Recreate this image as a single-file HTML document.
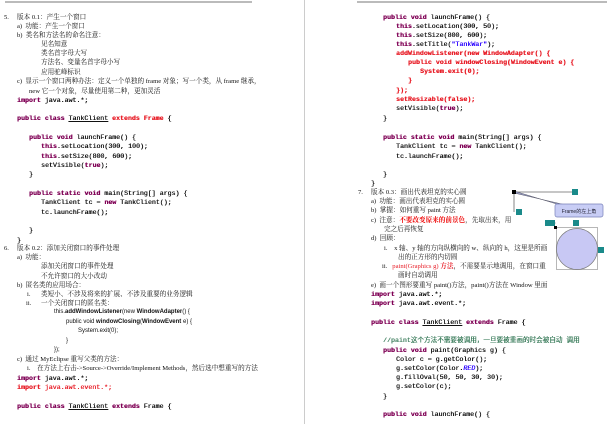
<!DOCTYPE html>
<html><head><meta charset="utf-8"><style>
html,body{margin:0;padding:0;background:#fff;width:607px;height:424px;overflow:hidden;position:relative}
.l{position:absolute;white-space:nowrap;line-height:9px;font-size:6.6px;color:#111}
.t{font-family:"Liberation Serif","Noto Serif CJK SC",serif}
.s{font-family:"Liberation Sans","Noto Sans CJK SC",sans-serif}
.c{font-family:"Liberation Mono","Noto Sans CJK SC",monospace;color:#111;font-size:6.6px;text-shadow:0.3px 0 0 currentColor}
.k{color:#7f0055;font-weight:bold}
.r{color:#e8202a}
.rb{color:#e8202a;font-weight:bold}
.b{color:#2a00ff}
.g{color:#3f7f5f}
.u{text-decoration:underline}
.bx{position:absolute;background:#1a8a8a;width:6px;height:6px}
</style></head><body>
<div style="position:absolute;left:5px;top:1px;width:247px;height:2px;background:#bbb"></div>
<div style="position:absolute;left:357px;top:1px;width:250px;height:2px;background:#bbb"></div>
<div style="position:absolute;left:304px;top:0;width:1px;height:424px;background:#ccc"></div>

<!-- left page -->
<div class="l t" style="left:4px;top:13px">5.</div>
<div class="l t" style="left:17px;top:13px">版本 0.1：产生一个窗口</div>
<div class="l t" style="left:17px;top:22px">a)&nbsp;&nbsp;功能：产生一个窗口</div>
<div class="l t" style="left:17px;top:31px">b)&nbsp;&nbsp;类名和方法名的命名注意：</div>
<div class="l t" style="left:41px;top:40px">见名知意</div>
<div class="l t" style="left:41px;top:49px">类名首字母大写</div>
<div class="l t" style="left:41px;top:58px">方法名、变量名首字母小写</div>
<div class="l t" style="left:41px;top:68px">应用驼峰标识</div>
<div class="l t" style="left:17px;top:77px">c)&nbsp;&nbsp;显示一个窗口两种办法：定义一个单独的 frame 对象；写一个类，从 frame 继承，</div>
<div class="l t" style="left:29px;top:87px">new 它一个对象，尽量使用第二种，更加灵活</div>
<div class="l c" style="left:17px;top:96px"><span class="k">import</span> java.awt.*;</div>
<div class="l c" style="left:17px;top:114px"><span class="k">public class</span> <span class="u">TankClient</span> <span class="rb">extends Frame</span> {</div>
<div class="l c" style="left:29px;top:133px"><span class="k">public void</span> launchFrame() {</div>
<div class="l c" style="left:41px;top:142px"><span class="k">this</span>.setLocation(300, 100);</div>
<div class="l c" style="left:41px;top:152px"><span class="k">this</span>.setSize(800, 600);</div>
<div class="l c" style="left:41px;top:161px">setVisible(<span class="k">true</span>);</div>
<div class="l c" style="left:29px;top:170px">}</div>
<div class="l c" style="left:29px;top:189px"><span class="k">public static void</span> main(String[] args) {</div>
<div class="l c" style="left:41px;top:198px">TankClient tc = <span class="k">new</span> TankClient();</div>
<div class="l c" style="left:41px;top:208px">tc.launchFrame();</div>
<div class="l c" style="left:29px;top:226px">}</div>
<div class="l c" style="left:17px;top:236px">}</div>
<div class="l t" style="left:4px;top:244px">6.</div>
<div class="l t" style="left:17px;top:244px">版本 0.2：添加关闭窗口的事件处理</div>
<div class="l t" style="left:17px;top:253px">a)&nbsp;&nbsp;功能：</div>
<div class="l t" style="left:41px;top:262px">添加关闭窗口的事件处理</div>
<div class="l t" style="left:41px;top:272px">不允许窗口的大小改动</div>
<div class="l t" style="left:17px;top:281px">b)&nbsp;&nbsp;匿名类的应用场合：</div>
<div class="l t" style="left:27px;top:290px">i.</div>
<div class="l t" style="left:41px;top:290px">类短小、不涉及将来的扩展、不涉及重要的业务逻辑</div>
<div class="l t" style="left:26px;top:299px">ii.</div>
<div class="l t" style="left:41px;top:299px">一个关闭窗口的匿名类：</div>
<div class="l s" style="left:54px;top:308px;font-size:6px">this.<b>addWindowListener</b>(new <b>WindowAdapter</b>() {</div>
<div class="l s" style="left:66px;top:318px;font-size:6px">public void <b>windowClosing</b>(<b>WindowEvent</b> e) {</div>
<div class="l s" style="left:78px;top:327px;font-size:6px">System.exit(0);</div>
<div class="l s" style="left:66px;top:337px;font-size:6px">}</div>
<div class="l s" style="left:54px;top:346px;font-size:6px">});</div>
<div class="l t" style="left:17px;top:355px">c)&nbsp;&nbsp;通过 MyEclipse 重写父类的方法：</div>
<div class="l t" style="left:27px;top:364px">i.&nbsp;&nbsp;&nbsp;&nbsp;在方法上右击-&gt;Source-&gt;Override/Implement Methods，然后选中想重写的方法</div>
<div class="l c" style="left:17px;top:374px"><span class="k">import</span> java.awt.*;</div>
<div class="l c r" style="left:17px;top:383px"><span style="font-weight:bold">import</span> java.awt.event.*;</div>
<div class="l c" style="left:17px;top:402px"><span class="k">public class</span> <span class="u">TankClient</span> <span class="k">extends</span> Frame {</div>

<!-- right page -->
<div class="l c" style="left:383px;top:13px"><span class="k">public void</span> launchFrame() {</div>
<div class="l c" style="left:396px;top:22px"><span class="k">this</span>.setLocation(300, 50);</div>
<div class="l c" style="left:396px;top:31px"><span class="k">this</span>.setSize(800, 600);</div>
<div class="l c" style="left:396px;top:40px"><span class="k">this</span>.setTitle(<span class="b">"TankWar"</span>);</div>
<div class="l c rb" style="left:396px;top:49px">addWindowListener(new WindowAdapter() {</div>
<div class="l c rb" style="left:408px;top:58px">public void windowClosing(WindowEvent e) {</div>
<div class="l c rb" style="left:420px;top:67px">System.exit(0);</div>
<div class="l c rb" style="left:408px;top:76px">}</div>
<div class="l c rb" style="left:396px;top:86px">});</div>
<div class="l c rb" style="left:396px;top:95px">setResizable(false);</div>
<div class="l c" style="left:396px;top:104px">setVisible(<span class="k">true</span>);</div>
<div class="l c" style="left:383px;top:114px">}</div>
<div class="l c" style="left:383px;top:133px"><span class="k">public static void</span> main(String[] args) {</div>
<div class="l c" style="left:396px;top:142px">TankClient tc = <span class="k">new</span> TankClient();</div>
<div class="l c" style="left:396px;top:152px">tc.launchFrame();</div>
<div class="l c" style="left:383px;top:170px">}</div>
<div class="l c" style="left:371px;top:179px">}</div>
<div class="l t" style="left:358px;top:188px">7.</div>
<div class="l t" style="left:371px;top:188px">版本 0.3：画出代表坦克的实心圆</div>
<div class="l t" style="left:371px;top:197px">a)&nbsp;&nbsp;功能：画出代表坦克的实心圆</div>
<div class="l t" style="left:371px;top:206px">b)&nbsp;&nbsp;掌握：如何重写 paint 方法</div>
<div class="l t" style="left:371px;top:216px">c)&nbsp;&nbsp;注意：<span style="color:#e00;font-weight:bold">不要改变原来的前景色</span>，先取出来，用</div>
<div class="l t" style="left:384px;top:225px">完之后再恢复</div>
<div class="l t" style="left:371px;top:234px">d)&nbsp;&nbsp;回顾：</div>
<div class="l t" style="left:384px;top:244px">i.&nbsp;&nbsp;&nbsp;&nbsp;x 轴、y 轴的方向纵横向的 w、纵向的 h，这里是所画</div>
<div class="l t" style="left:398px;top:253px">出的正方形的内切圆</div>
<div class="l t" style="left:382px;top:262px">ii.&nbsp;&nbsp;&nbsp;<span class="r">paint(Graphics g)</span> <b class="r">方法</b>，不需要显示地调用，在窗口重</div>
<div class="l t" style="left:398px;top:271px">画时自动调用</div>
<div class="l t" style="left:371px;top:281px">e)&nbsp;&nbsp;画一个图形要重写 paint()方法，paint()方法在 Window 里面</div>
<div class="l c" style="left:371px;top:290px"><span class="k">import</span> java.awt.*;</div>
<div class="l c" style="left:371px;top:299px"><span class="k">import</span> java.awt.event.*;</div>
<div class="l c" style="left:371px;top:318px"><span class="k">public class</span> <span class="u">TankClient</span> <span class="k">extends</span> Frame {</div>
<div class="l c g" style="left:383px;top:336px">//paint这个方法不需要被调用，一旦要被重画的时会被自动 调用</div>
<div class="l c" style="left:383px;top:346px"><span class="k">public void</span> paint(Graphics g) {</div>
<div class="l c" style="left:396px;top:355px">Color c = g.getColor();</div>
<div class="l c" style="left:396px;top:364px">g.setColor(Color.<i class="b">RED</i>);</div>
<div class="l c" style="left:396px;top:373px">g.fillOval(50, 50, 30, 30);</div>
<div class="l c" style="left:396px;top:382px">g.setColor(c);</div>
<div class="l c" style="left:383px;top:392px">}</div>
<div class="l c" style="left:383px;top:410px"><span class="k">public void</span> launchFrame() {</div>

<!-- diagram -->
<svg style="position:absolute;left:0;top:0" width="607" height="424">
<line x1="514" y1="192" x2="572" y2="192" stroke="#666" stroke-width="0.8"/>
<line x1="514" y1="192" x2="514" y2="212" stroke="#666" stroke-width="0.8"/>
<polygon points="514,191 560,205 566,205 514,193" fill="#9aa0c8" stroke="#556" stroke-width="0.5"/>
<rect x="555" y="204" width="48" height="13" rx="2" fill="#c8cdf5" stroke="#7780b8" stroke-width="0.7"/>
<text x="579" y="213" font-size="5" text-anchor="middle" font-family="Liberation Sans,Noto Sans CJK SC,sans-serif" fill="#223">Frame的左上角</text>
<line x1="549" y1="223" x2="556" y2="223" stroke="#888" stroke-width="0.5"/>
<rect x="556.5" y="227.5" width="41" height="42" fill="none" stroke="#999" stroke-width="0.7"/>
<circle cx="577" cy="249" r="20.5" fill="#c8c8f4" stroke="#777" stroke-width="0.7"/>
<rect x="512" y="190" width="4" height="4" fill="#000"/>
<rect x="554" y="226" width="3" height="3" fill="#000"/>
</svg>
<div class="bx" style="left:572px;top:189px"></div>
<div class="bx" style="left:516px;top:209px"></div>
<div class="bx" style="left:545px;top:220px;width:10px"></div>
<div class="bx" style="left:573px;top:220px"></div>
<div class="bx" style="left:598px;top:247px"></div>
</body></html>
